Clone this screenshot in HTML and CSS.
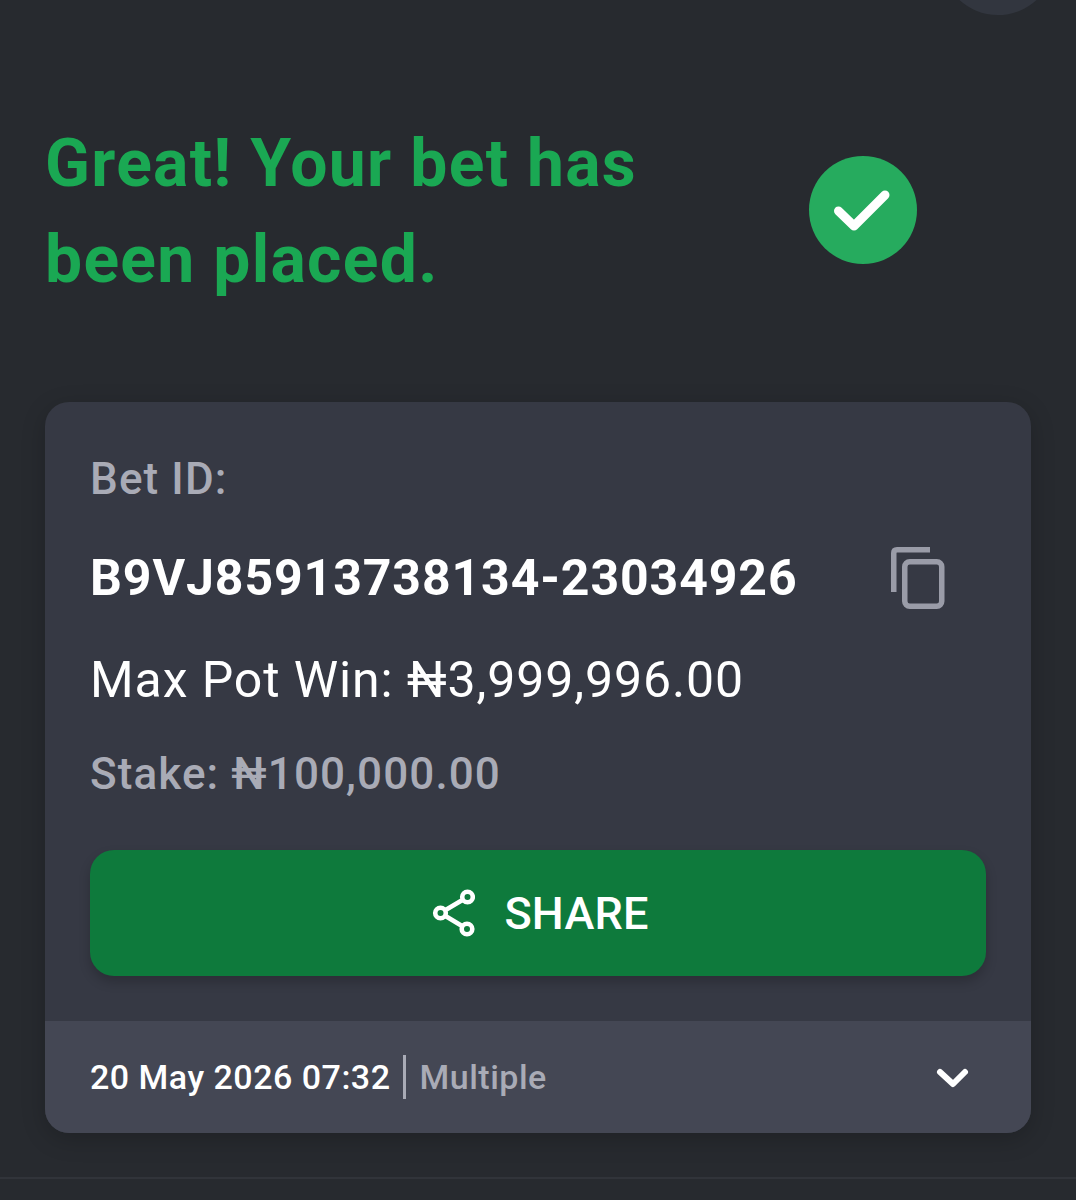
FILE: index.html
```html
<!DOCTYPE html>
<html>
<head>
    <title>Bet placed</title>
    <link rel="stylesheet" href="styles.css">
</head>
<body>
    <div class="top-circle"></div>

    <div class="hero">
        <h1>Great! Your bet has<br>been placed.</h1>
        <div class="check">
            <svg width="60" height="48" viewBox="0 0 60 48">
                <path d="M5.5 25 L21 40 L52 9" fill="none" stroke="#fff" stroke-width="9" stroke-linecap="round" stroke-linejoin="round"/>
            </svg>
        </div>
    </div>

    <div class="card">
        <div class="card-body">
            <p class="label">Bet ID:</p>
            <div class="id-row">
                <span class="bet-id">B9VJ85913738134-23034926</span>
                <svg class="copy" width="54" height="62" viewBox="0 0 54 62">
                    <path d="M39 2.75 H6 Q2.75 2.75 2.75 6 V45" fill="none" stroke="#9a9ca8" stroke-width="5.5"/>
                    <rect x="13.75" y="14.75" width="37" height="44.5" rx="5" fill="none" stroke="#9a9ca8" stroke-width="5.5"/>
                </svg>
            </div>
            <p class="pot">Max Pot Win: ₦3,999,996.00</p>
            <p class="stake">Stake: ₦100,000.00</p>
            <button class="share" type="button">
                <svg width="48" height="48" viewBox="0 0 48 48">
                    <path d="M13.5 24 L40.5 8 M13.5 24 L40 40" stroke="#fff" stroke-width="4.6"/>
                    <circle cx="13.5" cy="24" r="5.3" fill="#0e7a3c" stroke="#fff" stroke-width="4.6"/>
                    <circle cx="40.5" cy="8" r="5.3" fill="#0e7a3c" stroke="#fff" stroke-width="4.6"/>
                    <circle cx="40" cy="40" r="5.3" fill="#0e7a3c" stroke="#fff" stroke-width="4.6"/>
                </svg>
                SHARE
            </button>
        </div>
        <div class="card-foot">
            <span class="date">20 May 2026 07:32</span>
            <span class="type">Multiple</span>
            <svg class="chevron" width="36" height="24" viewBox="0 0 36 24">
                <path d="M5 7 L18 19 L30 7" fill="none" stroke="#fff" stroke-width="6" stroke-linecap="round" stroke-linejoin="round"/>
            </svg>
        </div>
    </div>

    <div class="bottom-line"></div>
</body>
</html>
```

FILE: styles.css
```css
/* Global styles */
html, body {
    height: 1200px;
    margin: 0;
    overflow: hidden;
}

body {
    position: relative;
    box-sizing: border-box;
    padding: 115px 45px 0;
    font-family: Roboto, "Liberation Sans", sans-serif;
    background-color: #272a2f;
    color: #fff;
}

p {
    margin: 0;
}

.top-circle {
    position: absolute;
    top: -99px;
    left: 941px;
    width: 114px;
    height: 114px;
    border-radius: 50%;
    background-color: #32363f;
}

/* Heading */
.hero {
    display: flex;
    align-items: center;
    height: 190px;
}

.hero h1 {
    margin: 3px 0 0;
    width: 764px;
    font-size: 66px;
    line-height: 96px;
    font-weight: 700;
    letter-spacing: 1.3px;
    color: #1aa853;
}

.check {
    display: flex;
    align-items: center;
    justify-content: center;
    width: 108px;
    height: 108px;
    border-radius: 50%;
    background-color: #26ab5e;
}

/* Card */
.card {
    margin-top: 97px;
    height: 731px;
    border-radius: 24px;
    overflow: hidden;
    background-color: #363944;
    box-shadow: 0 6px 24px rgba(0, 0, 0, 0.2);
}

.card-body {
    height: 619px;
    box-sizing: border-box;
    padding: 50px 45px 0;
}

.label {
    font-size: 44px;
    line-height: 54px;
    font-weight: 500;
    letter-spacing: 1.1px;
    color: #a9abb6;
}

.id-row {
    display: flex;
    align-items: center;
    justify-content: space-between;
    height: 64px;
    margin-top: 40px;
    padding-right: 41px;
}

.bet-id {
    font-size: 50px;
    font-weight: 700;
    letter-spacing: 0.9px;
}

.pot {
    margin-top: 38px;
    font-size: 50px;
    line-height: 64px;
    letter-spacing: 0.9px;
}

.stake {
    margin-top: 34px;
    font-size: 44px;
    line-height: 56px;
    font-weight: 500;
    letter-spacing: 1.1px;
    color: #a9abb6;
}

.share {
    display: flex;
    align-items: center;
    justify-content: center;
    gap: 29px;
    width: 100%;
    height: 126px;
    margin-top: 48px;
    border: 0;
    border-radius: 24px;
    background-color: #0e7a3c;
    color: #fff;
    font-family: inherit;
    font-size: 45px;
    font-weight: 500;
    letter-spacing: 0.2px;
    box-shadow: 0 6px 12px rgba(0, 0, 0, 0.2);
}

/* Card footer */
.card-foot {
    display: flex;
    align-items: center;
    height: 112px;
    padding: 0 60px 0 45px;
    background-color: #444754;
    font-size: 34px;
    font-weight: 500;
    letter-spacing: 0.5px;
}

.type {
    margin-left: 12px;
    padding-left: 14px;
    border-left: 3px solid #a9abb6;
    line-height: 44px;
    color: #a9abb6;
}

.chevron {
    margin-left: auto;
}

.bottom-line {
    position: absolute;
    left: 0;
    right: 0;
    top: 1177px;
    height: 2px;
    background-color: #31343a;
}
```
